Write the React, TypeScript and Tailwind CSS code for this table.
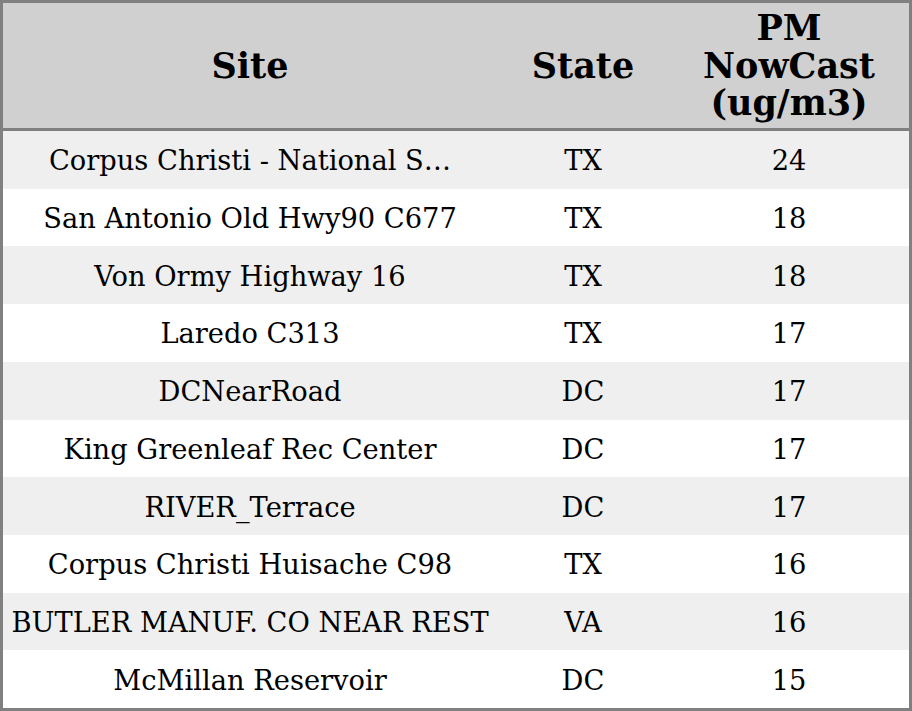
const rows: [string, string, string][] = [
  ["Corpus Christi - National S…", "TX", "24"],
  ["San Antonio Old Hwy90 C677", "TX", "18"],
  ["Von Ormy Highway 16", "TX", "18"],
  ["Laredo C313", "TX", "17"],
  ["DCNearRoad", "DC", "17"],
  ["King Greenleaf Rec Center", "DC", "17"],
  ["RIVER_Terrace", "DC", "17"],
  ["Corpus Christi Huisache C98", "TX", "16"],
  ["BUTLER MANUF. CO NEAR REST", "VA", "16"],
  ["McMillan Reservoir", "DC", "15"],
];

export default function App() {
  return (
    <div className="w-[912px] h-[711px] border-[3px] border-[#808080] flex flex-col bg-white text-black font-['DejaVu_Serif',serif]">
      {/* header */}
      <div className="h-[128px] shrink-0 grid grid-cols-[494px_172px_1fr] items-center bg-[#d0d0d0] border-b-[3px] border-[#808080] text-[35px] font-bold leading-[37.5px] text-center">
        <div>Site</div>
        <div>State</div>
        <div>
          PM
          <br />
          NowCast
          <br />
          (ug/m3)
        </div>
      </div>

      {/* rows */}
      <div className="flex-1 flex flex-col">
        {rows.map(([site, state, pm], i) => (
          <div
            key={i}
            className={`flex-1 grid grid-cols-[494px_172px_1fr] items-center pt-[4px] text-center text-[27.3px] whitespace-nowrap ${
              i % 2 === 0 ? "bg-[#efefef]" : "bg-white"
            }`}
          >
            <div>{site}</div>
            <div>{state}</div>
            <div>{pm}</div>
          </div>
        ))}
      </div>
    </div>
  );
}
